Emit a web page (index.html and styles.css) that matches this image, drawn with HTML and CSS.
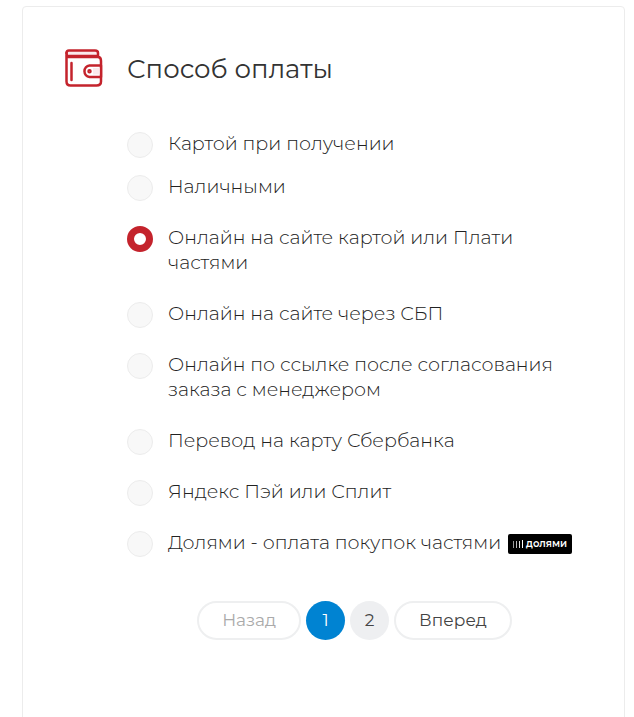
FILE: index.html
```html
<!DOCTYPE html>
<html lang="ru">
<head>
    <meta charset="UTF-8">
    <title>Способ оплаты</title>
    <link rel="stylesheet" href="styles.css">
</head>
<body>
    <form class="payment">
        <svg class="payment-icon" viewBox="0 0 38 38" fill="none" stroke="#c4232c" stroke-width="2.500" stroke-linejoin="round" stroke-linecap="round" aria-hidden="true">
            <path d="M2 7h31v-3q0-2.500-3-2.500H4Q1.500 1.500 1.500 4" fill="#fbe9ec"/>
            <path d="M1.500 4v28.500q0 4 4 4h26q4.500 0 4.500-4V12q0-4-3-4H4Q1.500 8 1.500 4"/>
            <path d="M6.500 14v17"/>
            <path d="M36 16.500H24.500a5.800 5.800 0 0 0 0 11.500H36z" fill="#fff"/>
            <path d="M28 19h6.500v6.500h-6.500z" fill="#fbe9ec" stroke="none"/>
            <circle cx="24.500" cy="22.300" r="1"/>
        </svg>
        <div class="payment-content">
            <h2 class="payment-title" id="payment-title">Способ оплаты</h2>
            <div class="options" role="radiogroup" aria-labelledby="payment-title">
                <label class="option option-compact">
                    <input type="radio" name="payment" value="card">
                    <span class="option-text">Картой при получении</span>
                </label>
                <label class="option">
                    <input type="radio" name="payment" value="cash">
                    <span class="option-text">Наличными</span>
                </label>
                <label class="option">
                    <input type="radio" name="payment" value="online" checked>
                    <span class="option-text">Онлайн на сайте картой или Плати частями</span>
                </label>
                <label class="option">
                    <input type="radio" name="payment" value="sbp">
                    <span class="option-text">Онлайн на сайте через СБП</span>
                </label>
                <label class="option">
                    <input type="radio" name="payment" value="link">
                    <span class="option-text">Онлайн по ссылке после согласования заказа с менеджером</span>
                </label>
                <label class="option">
                    <input type="radio" name="payment" value="sber">
                    <span class="option-text">Перевод на карту Сбербанка</span>
                </label>
                <label class="option">
                    <input type="radio" name="payment" value="yandex">
                    <span class="option-text">Яндекс Пэй или Сплит</span>
                </label>
                <label class="option">
                    <input type="radio" name="payment" value="dolyami">
                    <span class="option-text">Долями - оплата покупок частями</span>
                    <span class="dolyami">
                        <svg width="11" height="8" viewBox="0 0 11 8" aria-hidden="true">
                            <path d="M0.500 1v7" stroke="#999"/>
                            <path d="M3.500 1v7" stroke="#bbb"/>
                            <path d="M6.500 1v7" stroke="#ddd"/>
                            <path d="M9.500 0v8" stroke="#fff"/>
                        </svg>
                        долями
                    </span>
                </label>
            </div>
            <nav class="pages" aria-label="Страницы">
                <button type="button" class="page-link" disabled>Назад</button>
                <button type="button" class="page-number active" aria-current="page">1</button>
                <button type="button" class="page-number">2</button>
                <button type="button" class="page-link">Вперед</button>
            </nav>
        </div>
    </form>
</body>
</html>
```
FILE: styles.css
```css
* {
    box-sizing: border-box;
}

body {
    margin: 0;
    padding: 6px 9px 0 22px;
    background: #fff;
    color: #222;
    font-family: Montserrat, Inter, sans-serif;
    font-size: 19px;
    font-weight: 300;
    line-height: 25px;
}

.payment {
    display: flex;
    gap: 24px;
    min-height: 100vh;
    padding: 42px;
    border: 1px solid #ececec;
    border-radius: 4px;
}

.payment-icon {
    flex: none;
    width: 38px;
    height: 38px;
}

.payment-content {
    flex: 1;
    min-width: 0;
}

.payment-title {
    margin: 0 0 42px;
    color: #333;
    font-size: 26px;
    font-weight: 400;
    line-height: 40px;
}

.options {
    display: flex;
    flex-direction: column;
    gap: 24px;
}

.option {
    display: flex;
    align-items: flex-start;
    gap: 15px;
    cursor: pointer;
}

.option-compact {
    margin-bottom: -8px;
}

.option-text {
    padding-bottom: 2px;
}

.option input {
    appearance: none;
    flex: none;
    width: 26px;
    height: 26px;
    margin: 1px 0 0;
    border: 1px solid #ececec;
    border-radius: 50%;
    background: #f8f8f8;
    cursor: pointer;
}

.option input:checked {
    border: 7px solid #c4232c;
    background: #fff;
}

.dolyami {
    display: flex;
    align-items: center;
    justify-content: center;
    gap: 2px;
    flex: none;
    align-self: center;
    width: 64px;
    height: 20px;
    margin-left: -8px;
    border-radius: 2px;
    background: #000;
    color: #fff;
    font-size: 10px;
    font-weight: 600;
    line-height: 18px;
}

.pages {
    display: flex;
    justify-content: center;
    gap: 5px;
    margin-top: 44px;
}

.pages button {
    height: 39px;
    padding: 0;
    border: none;
    border-radius: 20px;
    background: #eeeff1;
    color: #444;
    font: inherit;
    font-size: 17px;
    font-weight: 400;
    cursor: pointer;
}

.pages .page-number {
    width: 39px;
}

.pages .active {
    background: #0083d2;
    color: #fff;
}

.pages .page-link {
    padding: 0 23px;
    border: 2px solid #eeeff0;
    background: #fff;
}

.pages .page-link:disabled {
    color: #aaa;
    cursor: default;
}
```
